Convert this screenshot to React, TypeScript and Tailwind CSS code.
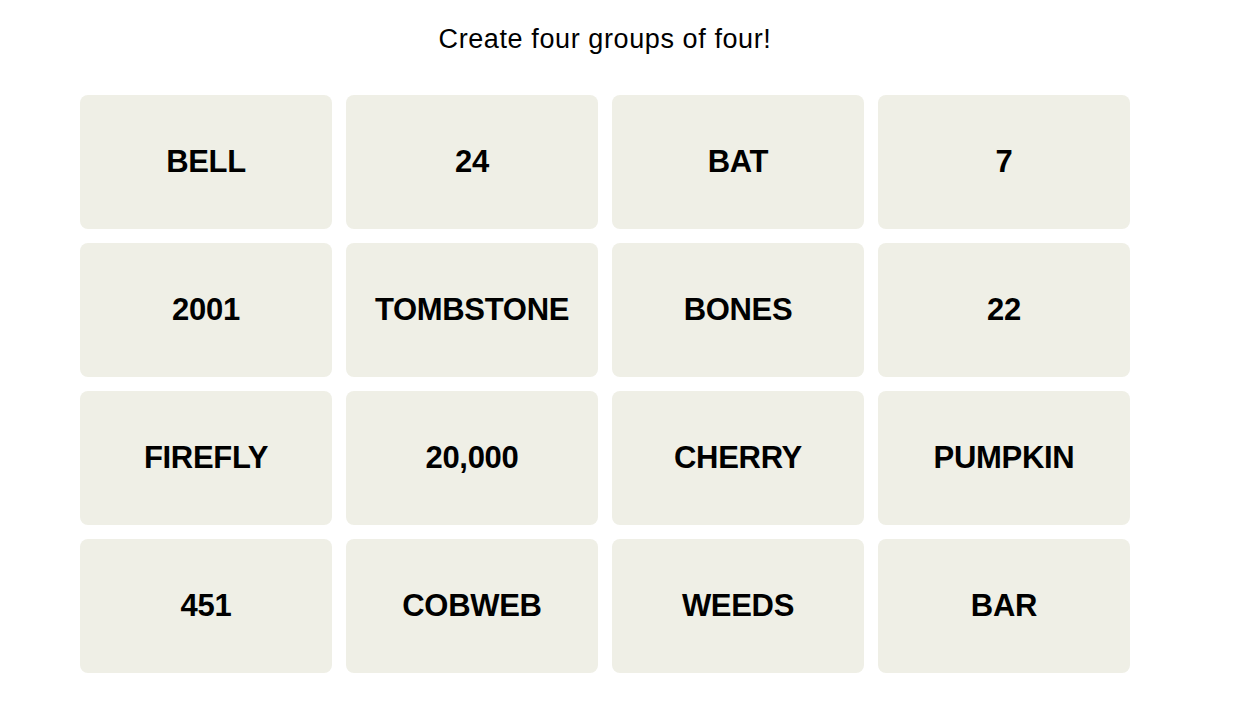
import React from "react";

const words = [
  "BELL", "24", "BAT", "7",
  "2001", "TOMBSTONE", "BONES", "22",
  "FIREFLY", "20,000", "CHERRY", "PUMPKIN",
  "451", "COBWEB", "WEEDS", "BAR",
];

export default function App() {
  return (
    <div className="min-h-screen bg-white font-['Liberation_Sans',Arial,sans-serif] text-black">
      <div className="ml-[80px] w-[1050px] pt-[20px]">
        <h1 className="text-center text-[27px] leading-[38px] tracking-[0.6px] font-normal">
          Create four groups of four!
        </h1>
        <div className="mt-[37px] grid grid-cols-4 gap-[14px]">
          {words.map((w) => (
            <button
              key={w}
              className="h-[134px] rounded-[8px] bg-[#efefe6] flex items-center justify-center text-[31px] font-bold tracking-[-0.3px]"
            >
              {w}
            </button>
          ))}
        </div>
      </div>
    </div>
  );
}
